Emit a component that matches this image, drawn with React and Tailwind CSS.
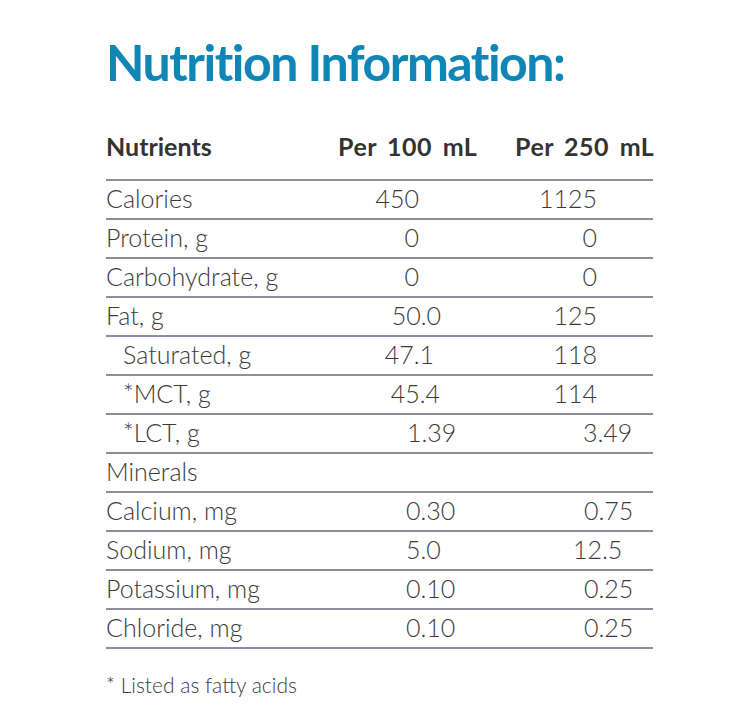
import React from "react";

const rows = [
  { label: "Calories", indent: false, a: "450", ac: "text-right pr-[87px]", b: "1125", bc: "text-right pr-[56px]" },
  { label: "Protein, g", indent: false, a: "0", ac: "text-right pr-[87px]", b: "0", bc: "text-right pr-[56px]" },
  { label: "Carbohydrate, g", indent: false, a: "0", ac: "text-right pr-[87px]", b: "0", bc: "text-right pr-[56px]" },
  { label: "Fat, g", indent: false, a: "50.0", ac: "text-right pr-[65px]", b: "125", bc: "text-right pr-[56px]" },
  { label: "Saturated, g", indent: true, a: "47.1", ac: "text-right pr-[72px]", b: "118", bc: "text-right pr-[56px]" },
  { label: "*MCT, g", indent: true, a: "45.4", ac: "text-right pr-[66px]", b: "114", bc: "text-right pr-[56px]" },
  { label: "*LCT, g", indent: true, a: "1.39", ac: "pl-[71px]", b: "3.49", bc: "pl-[77px]" },
  { label: "Minerals", indent: false, a: "", ac: "", b: "", bc: "" },
  { label: "Calcium, mg", indent: false, a: "0.30", ac: "pl-[70px]", b: "0.75", bc: "pl-[78px]" },
  { label: "Sodium, mg", indent: false, a: "5.0", ac: "pl-[70px]", b: "12.5", bc: "pl-[67px]" },
  { label: "Potassium, mg", indent: false, a: "0.10", ac: "pl-[70px]", b: "0.25", bc: "pl-[78px]" },
  { label: "Chloride, mg", indent: false, a: "0.10", ac: "pl-[70px]", b: "0.25", bc: "pl-[78px]" },
];

export default function App() {
  return (
    <div className="min-h-[715px] w-[732px] bg-white font-['Lato','Noto_Sans',sans-serif]">
      <div className="pl-[106px] pt-[32px]">
        <h1 className="text-[50px] leading-[60px] font-bold text-[#0f86b6] tracking-[-1.5px] [font-variant-ligatures:none] whitespace-nowrap">
          Nutrition Information:
        </h1>
        <div className="w-[547px] mt-[39px]">
          <div className="flex h-[48px] items-start text-[25px] leading-[30px] font-bold text-[#333333] whitespace-nowrap">
            <div className="w-[230px]">Nutrients</div>
            <div className="w-[170px] pl-[2px] [word-spacing:4px] tracking-[0.5px]">Per 100 mL</div>
            <div className="w-[147px] pl-[9px] [word-spacing:4px] tracking-[0.5px]">Per 250 mL</div>
          </div>
          {rows.map((r, i) => (
            <div
              key={i}
              className={
                "flex h-[39px] items-center border-t-2 border-[#8e8e9e] text-[25px] leading-[28px] font-light text-[#3a3a3a] whitespace-nowrap pb-[3px]" +
                (i === rows.length - 1 ? " border-b-2 h-[41px]" : "")
              }
            >
              <div className={"w-[230px]" + (r.indent ? " pl-[17px]" : "")}>{r.label}</div>
              <div className={"w-[170px] " + r.ac}>{r.a}</div>
              <div className={"w-[147px] " + r.bc}>{r.b}</div>
            </div>
          ))}
        </div>
        <p className="mt-[24px] text-[21px] leading-[24px] font-light text-[#3a3a3a]">
          * Listed as fatty acids
        </p>
      </div>
    </div>
  );
}
